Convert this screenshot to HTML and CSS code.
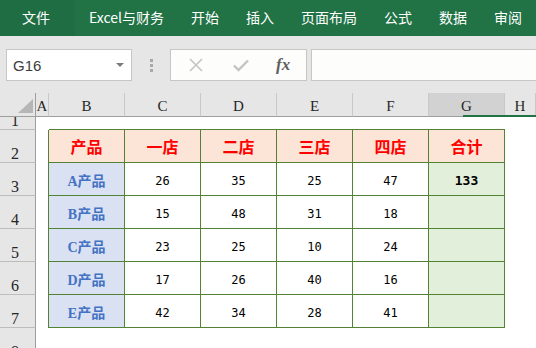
FILE: index.html
```html
<!DOCTYPE html>
<html lang="zh-CN">
<head>
    <meta charset="UTF-8">
    <title>Excel</title>
    <link rel="stylesheet" href="styles.css">
</head>
<body>
    <!-- Ribbon tabs -->
    <div class="ribbon">
        <span class="tab tab-file">文件</span>
        <span class="tab">Excel与财务</span>
        <span class="tab">开始</span>
        <span class="tab">插入</span>
        <span class="tab">页面布局</span>
        <span class="tab">公式</span>
        <span class="tab">数据</span>
        <span class="tab">审阅</span>
    </div>

    <!-- Formula bar -->
    <div class="formula-bar">
        <div class="name-box">
            <span>G16</span>
            <span class="caret"></span>
        </div>
        <div class="grip"><i></i><i></i><i></i></div>
        <div class="fx-box">
            <svg class="icon" width="14" height="14" viewBox="0 0 14 14">
                <path d="M1 1 L13 13 M13 1 L1 13" stroke="#c4c4c4" stroke-width="1.6" fill="none"/>
            </svg>
            <svg class="icon" width="16" height="14" viewBox="0 0 16 14">
                <path d="M1 7.5 L5.5 12 L15 2.5" stroke="#c4c4c4" stroke-width="2.4" fill="none"/>
            </svg>
            <span class="fx">fx</span>
        </div>
        <div class="formula-input"></div>
    </div>

    <!-- Sheet -->
    <div class="sheet">
        <div class="corner"><span class="tri"></span></div>
        <div class="colhead">A</div>
        <div class="colhead">B</div>
        <div class="colhead">C</div>
        <div class="colhead">D</div>
        <div class="colhead">E</div>
        <div class="colhead">F</div>
        <div class="colhead sel">G</div>
        <div class="colhead">H</div>

        <div class="rowhead">1</div>
        <div class="cell"></div>
        <div class="cell t-top"></div>
        <div class="cell t-top"></div>
        <div class="cell t-top"></div>
        <div class="cell t-top"></div>
        <div class="cell t-top"></div>
        <div class="cell t-top"></div>
        <div class="cell"></div>

        <div class="rowhead">2</div>
        <div class="cell t-left"></div>
        <div class="tc th">产品</div>
        <div class="tc th">一店</div>
        <div class="tc th">二店</div>
        <div class="tc th">三店</div>
        <div class="tc th">四店</div>
        <div class="tc th">合计</div>
        <div class="cell"></div>

        <div class="rowhead">3</div>
        <div class="cell t-left"></div>
        <div class="tc name">A产品</div>
        <div class="tc num">26</div>
        <div class="tc num">35</div>
        <div class="tc num">25</div>
        <div class="tc num">47</div>
        <div class="tc sum">133</div>
        <div class="cell"></div>

        <div class="rowhead">4</div>
        <div class="cell t-left"></div>
        <div class="tc name">B产品</div>
        <div class="tc num">15</div>
        <div class="tc num">48</div>
        <div class="tc num">31</div>
        <div class="tc num">18</div>
        <div class="tc sum"></div>
        <div class="cell"></div>

        <div class="rowhead">5</div>
        <div class="cell t-left"></div>
        <div class="tc name">C产品</div>
        <div class="tc num">23</div>
        <div class="tc num">25</div>
        <div class="tc num">10</div>
        <div class="tc num">24</div>
        <div class="tc sum"></div>
        <div class="cell"></div>

        <div class="rowhead">6</div>
        <div class="cell t-left"></div>
        <div class="tc name">D产品</div>
        <div class="tc num">17</div>
        <div class="tc num">26</div>
        <div class="tc num">40</div>
        <div class="tc num">16</div>
        <div class="tc sum"></div>
        <div class="cell"></div>

        <div class="rowhead">7</div>
        <div class="cell t-left"></div>
        <div class="tc name">E产品</div>
        <div class="tc num">42</div>
        <div class="tc num">34</div>
        <div class="tc num">28</div>
        <div class="tc num">41</div>
        <div class="tc sum"></div>
        <div class="cell"></div>

        <div class="rowhead">8</div>
        <div class="cell"></div>
        <div class="cell"></div>
        <div class="cell"></div>
        <div class="cell"></div>
        <div class="cell"></div>
        <div class="cell"></div>
        <div class="cell"></div>
        <div class="cell"></div>

        <!-- selection marker under the header -->
        <span class="sel-bar"></span>
    </div>
</body>
</html>
```

FILE: styles.css
```css
*{
    box-sizing: border-box;
}
body{
    margin: 0;
    width: 536px;
    height: 348px;
    overflow: hidden;
    background-color: #e6e6e6;
    font-family: "Noto Sans CJK SC", "Liberation Sans", sans-serif;
}

/* ribbon */
.ribbon{
    height: 36px;
    background-color: #217346;
    display: flex;
    align-items: center;
    white-space: nowrap;
}
.tab{
    height: 36px;
    line-height: 34px;
    padding: 0 13px 0 14px;
    color: #ffffff;
    font-size: 14px;
}
.tab-file{
    padding: 0 25px 0 22px;
    background-color: #1f6e43;
}

/* formula bar */
.formula-bar{
    height: 57px;
    display: flex;
    align-items: flex-start;
    padding: 13px 0 0 6px;
}
.name-box{
    width: 126px;
    height: 32px;
    background-color: #ffffff;
    border: 1px solid #c6c6c6;
    display: flex;
    align-items: center;
    justify-content: space-between;
    padding: 0 7px 0 6px;
    font-family: "Liberation Sans", sans-serif;
    font-size: 15px;
    color: #3c3c3c;
}
.caret{
    width: 0;
    height: 0;
    border-left: 4px solid transparent;
    border-right: 4px solid transparent;
    border-top: 4px solid #7a7a7a;
}
.grip{
    width: 38px;
    height: 32px;
    display: flex;
    flex-direction: column;
    align-items: center;
    justify-content: center;
    gap: 2px;
}
.grip i{
    width: 3px;
    height: 3px;
    background-color: #a8a8a8;
}
.fx-box{
    width: 137px;
    height: 32px;
    background-color: #fdfdfc;
    border: 1px solid #c6c6c6;
    display: flex;
    align-items: center;
    padding: 0 0 0 18px;
    gap: 30px;
}
.fx{
    font-family: "Liberation Serif", serif;
    font-style: italic;
    font-weight: bold;
    font-size: 17px;
    color: #606060;
    margin-left: -3px;
}
.formula-input{
    flex: 1;
    height: 32px;
    margin-left: 4px;
    background-color: #fdfdfb;
    border: 1px solid #c6c6c6;
    border-right: none;
}

/* sheet grid */
.sheet{
    position: relative;
    display: grid;
    grid-template-columns: 36px 13px repeat(6, 76px) 1fr;
    grid-template-rows: 24px 13px repeat(7, 33px);
    background-color: #ffffff;
}
.corner{
    background-color: #e6e6e6;
    border-right: 1px solid #9e9e9e;
    border-bottom: 1px solid #9e9e9e;
    position: relative;
}
.tri{
    position: absolute;
    right: 2px;
    bottom: 3px;
    width: 0;
    height: 0;
    border-left: 15px solid transparent;
    border-bottom: 14px solid #b6b6b6;
}
.colhead{
    background-color: #e6e6e6;
    border-right: 1px solid #c8c8c8;
    border-bottom: 1px solid #9e9e9e;
    display: flex;
    align-items: center;
    justify-content: center;
    padding-top: 3px;
    font-family: "Liberation Serif", serif;
    font-size: 15px;
    color: #262626;
}
.colhead.sel{
    background-color: #d2d2d2;
}
.rowhead{
    background-color: #e6e6e6;
    border-right: 1px solid #9e9e9e;
    border-bottom: 1px solid #bdbdbd;
    overflow: hidden;
    display: flex;
    align-items: flex-end;
    justify-content: center;
    padding-right: 5px;
    font-family: "Liberation Serif", serif;
    font-size: 16px;
    line-height: 16px;
    color: #262626;
}
.cell{
    background-color: #ffffff;
}
.t-top{
    border-bottom: 1px solid #548235;
}
.t-left{
    border-right: 1px solid #548235;
}

/* table cells */
.tc{
    border-right: 1px solid #548235;
    border-bottom: 1px solid #548235;
    display: flex;
    align-items: center;
    justify-content: center;
    background-color: #ffffff;
}
.th{
    background-color: #fce4d6;
    color: #ff0000;
    font-weight: bold;
    font-size: 16px;
}
.name{
    background-color: #d9e1f2;
    color: #4472c4;
    font-family: "Liberation Serif", "Noto Sans CJK SC", serif;
    font-weight: bold;
    font-size: 14px;
    padding-top: 1px;
}
.num{
    font-family: "DejaVu Sans Mono", monospace;
    font-size: 12px;
    color: #000000;
    padding-top: 3px;
}
.sum{
    background-color: #e2efda;
    font-family: "DejaVu Sans Mono", monospace;
    font-weight: bold;
    font-size: 13px;
    color: #000000;
    padding-top: 3px;
}
.sel-bar{
    position: absolute;
    left: 463px;
    right: 0;
    top: 22px;
    height: 2px;
    background-color: #217346;
}
```
